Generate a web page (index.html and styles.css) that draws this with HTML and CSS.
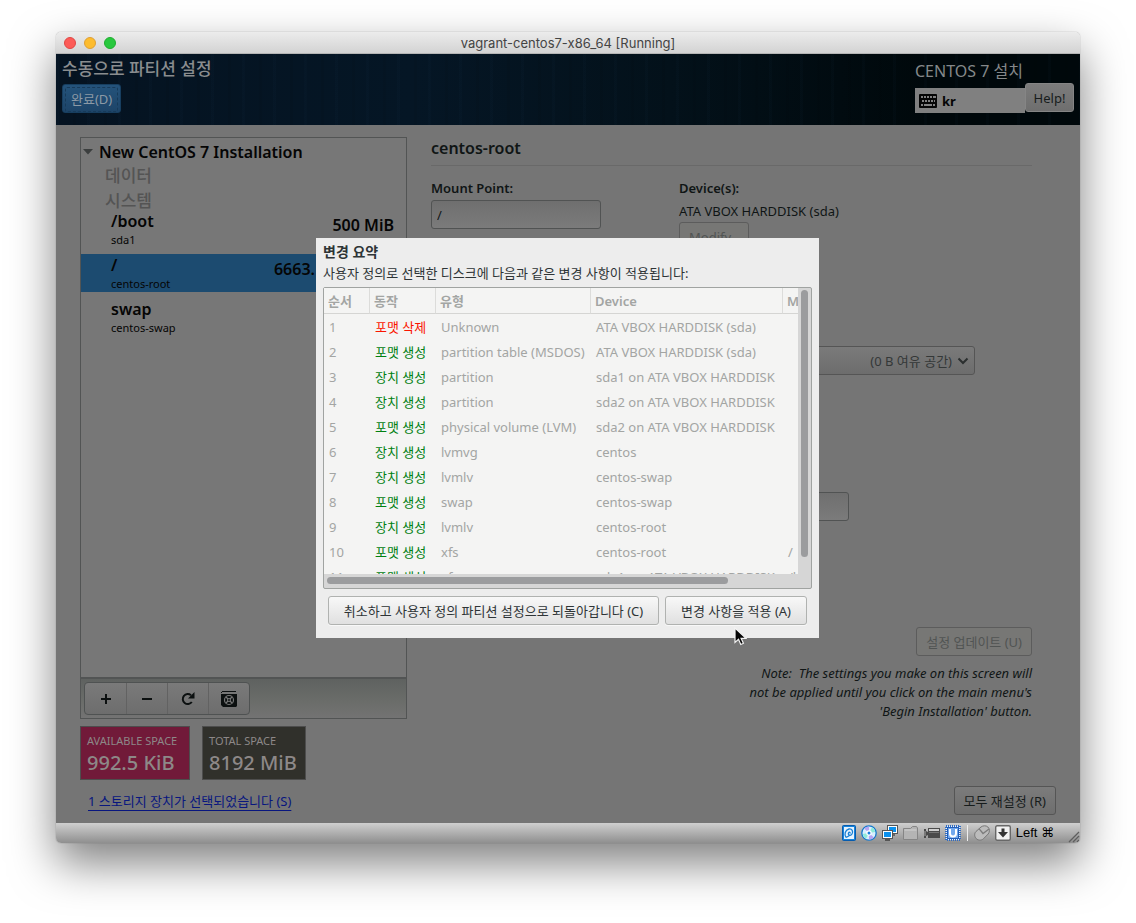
FILE: index.html
```html
<!DOCTYPE html>
<html lang="ko">
<head>
<meta charset="utf-8">
<title>vagrant-centos7-x86_64 [Running]</title>
<link rel="stylesheet" href="styles.css">
</head>
<body>
<div class="window">
  <div class="titlebar">
    <div class="lights">
      <button class="light red" aria-label="Close"></button>
      <button class="light amber" aria-label="Minimize"></button>
      <button class="light green" aria-label="Zoom"></button>
    </div>
    <span class="caption">vagrant-centos7-x86_64 [Running]</span>
  </div>

  <div class="screen">
    <header class="header">
      <div class="header-left">
        <h1>수동으로 파티션 설정</h1>
        <button class="done"><span>완료(D)</span></button>
      </div>
      <div class="header-right">
        <div class="product">
          <span class="product-name">CENTOS 7 설치</span>
          <button class="layout">
            <svg width="18" height="14" viewBox="0 0 18 14"><rect width="18" height="14" rx="1" fill="#050505"/><path d="M2 3h2m1 0h2m1 0h2m1 0h2m1 0h3M3 7h2m1 0h2m1 0h2m1 0h2m1 0h1M2 11h2m1 0h8m1 0h2" stroke="#808080" stroke-width="2"/></svg>
            <span>kr</span>
          </button>
        </div>
        <button class="btn help">Help!</button>
      </div>
    </header>

    <main class="content">
      <div class="panes">
        <section class="left">
          <div class="tree">
            <div class="root">
              <svg width="10" height="6" viewBox="0 0 10 6"><path d="M0 0h10L5 5.500z" fill="#3b3e3e"/></svg>
              <span>New CentOS 7 Installation</span>
            </div>
            <div class="group">데이터</div>
            <div class="group">시스템</div>
            <div class="mount">
              <div><div class="mount-name">/boot</div><div class="mount-dev">sda1</div></div>
              <div class="mount-size">500 MiB</div>
            </div>
            <div class="mount selected">
              <div><div class="mount-name">/</div><div class="mount-dev">centos-root</div></div>
              <div class="mount-size">6663.</div>
            </div>
            <div class="mount">
              <div><div class="mount-name">swap</div><div class="mount-dev">centos-swap</div></div>
              <div class="mount-size"></div>
            </div>
          </div>
          <div class="toolbar">
            <div class="tools">
              <button aria-label="Add"><svg width="12" height="12" viewBox="0 0 12 12"><path d="M6 1v10M1 6h10" stroke="#0c1010" stroke-width="2"/></svg></button>
              <button aria-label="Remove"><svg width="12" height="12" viewBox="0 0 12 12"><path d="M1 6h10" stroke="#0c1010" stroke-width="2"/></svg></button>
              <button aria-label="Reload"><svg width="14" height="14" viewBox="0 0 14 14"><path d="M10.800 10A5 5 0 1 1 10 3.200" fill="none" stroke="#0c1010" stroke-width="2"/><path d="M13.500 0v6.500H7z" fill="#0c1010"/></svg></button>
              <button aria-label="Configure"><svg width="16" height="16" viewBox="0 0 16 16"><path d="M1 0h14v1H1zM0 1h1v1H0zM0 3h16v12l-1 1H2l-2-2z" fill="#0c1010"/><circle cx="8" cy="9" r="4.500" fill="none" stroke="#777" stroke-width="1.200"/><circle cx="8" cy="9" r="1.500" fill="none" stroke="#777"/><path d="M5 6l2 2m2 2 2 2M11 6 9 8m-2 2-2 2" stroke="#777" stroke-width="1.200"/></svg></button>
            </div>
          </div>
          <div class="spaces">
            <div class="space pink"><div class="space-label">AVAILABLE SPACE</div><div class="space-value">992.5 KiB</div></div>
            <div class="space dark"><div class="space-label">TOTAL SPACE</div><div class="space-value">8192 MiB</div></div>
          </div>
        </section>

        <section class="right">
          <h2>centos-root</h2>
          <div class="fields">
            <div class="field">
              <label for="mount">Mount Point:</label>
              <input id="mount" class="entry" type="text" value="/">
            </div>
            <div class="field">
              <span class="label">Device(s):</span>
              <span class="device">ATA VBOX HARDDISK (sda)</span>
              <button class="btn modify" disabled>Modify...</button>
            </div>
          </div>
          <div class="fields group-row">
            <div class="combo">
              <select aria-label="Volume Group"><option>(0 B 여유 공간)</option></select>
              <svg class="chevron" width="12" height="8" viewBox="0 0 12 8"><path d="M1.500 1.500 6 6l4.500-4.500" fill="none" stroke="#2b2f2f" stroke-width="2"/></svg>
            </div>
          </div>
          <div class="fields name-row">
            <input class="entry" type="text" aria-label="Name">
          </div>
          <div class="update">
            <button class="btn" disabled>설정 업데이트 (U)</button>
            <p class="note">Note:&nbsp; The settings you make on this screen will<br>not be applied until you click on the main menu's<br>'Begin Installation' button.</p>
          </div>
        </section>
      </div>
      <div class="bottom">
        <a class="storage" href="#">1 스토리지 장치가 선택되었습니다 (S)</a>
        <button class="btn">모두 재설정 (R)</button>
      </div>
    </main>

    <div class="dialog" role="dialog" aria-labelledby="dialog-title">
      <h3 id="dialog-title">변경 요약</h3>
      <p>사용자 정의로 선택한 디스크에 다음과 같은 변경 사항이 적용됩니다:</p>
      <div class="scroller">
        <div class="viewport">
          <table>
            <colgroup><col class="c-order"><col class="c-action"><col class="c-type"><col class="c-device"><col class="c-mount"></colgroup>
            <thead><tr><th>순서</th><th>동작</th><th>유형</th><th>Device</th><th>Mount point</th></tr></thead>
            <tbody>
              <tr><td>1</td><td class="destroy">포맷 삭제</td><td>Unknown</td><td>ATA VBOX HARDDISK (sda)</td><td></td></tr>
              <tr><td>2</td><td class="create">포맷 생성</td><td>partition table (MSDOS)</td><td>ATA VBOX HARDDISK (sda)</td><td></td></tr>
              <tr><td>3</td><td class="create">장치 생성</td><td>partition</td><td>sda1 on ATA VBOX HARDDISK</td><td></td></tr>
              <tr><td>4</td><td class="create">장치 생성</td><td>partition</td><td>sda2 on ATA VBOX HARDDISK</td><td></td></tr>
              <tr><td>5</td><td class="create">포맷 생성</td><td>physical volume (LVM)</td><td>sda2 on ATA VBOX HARDDISK</td><td></td></tr>
              <tr><td>6</td><td class="create">장치 생성</td><td>lvmvg</td><td>centos</td><td></td></tr>
              <tr><td>7</td><td class="create">장치 생성</td><td>lvmlv</td><td>centos-swap</td><td></td></tr>
              <tr><td>8</td><td class="create">포맷 생성</td><td>swap</td><td>centos-swap</td><td></td></tr>
              <tr><td>9</td><td class="create">장치 생성</td><td>lvmlv</td><td>centos-root</td><td></td></tr>
              <tr><td>10</td><td class="create">포맷 생성</td><td>xfs</td><td>centos-root</td><td>/</td></tr>
              <tr><td>11</td><td class="create">포맷 생성</td><td>xfs</td><td>sda1 on ATA VBOX HARDDISK</td><td>/boot</td></tr>
            </tbody>
          </table>
        </div>
        <div class="track-v"><div class="thumb-v"></div></div>
        <div class="track-h"><div class="thumb-h"></div></div>
      </div>
      <div class="actions">
        <button class="btn light-btn cancel">취소하고 사용자 정의 파티션 설정으로 되돌아갑니다 (C)</button>
        <button class="btn light-btn accept">변경 사항을 적용 (A)</button>
      </div>
      <svg class="cursor" width="13" height="19" viewBox="0 0 13 19"><path d="M1 1v14.500l3.500-3.200 2.300 5.200 2.600-1.200-2.300-5H12z" fill="#050505" stroke="#f4f4f4" stroke-width="1.200"/></svg>
    </div>
  </div>

  <footer class="status">
    <svg width="14" height="16" viewBox="0 0 14 16"><rect x=".5" y=".5" width="13" height="15" rx="1" fill="#1583dc" stroke="#075cae"/><rect x="2" y="2" width="10" height="12" fill="#e6f4ff"/><path d="M4 12.500c-2-3-1-7.500 3-8.500 3-.5 4.500 2.500 3 5-1.500 2.500-4.500 1-3.500-1 .6-1.200 2-.8 1.500.5M4 12.500 8.500 10" fill="none" stroke="#187fd3" stroke-width="1.300"/></svg>
    <svg width="16" height="16" viewBox="0 0 16 16"><circle cx="8" cy="8" r="7.200" fill="#d8efff" stroke="#1478cc" stroke-width="1.300"/><path d="M8 8 3 3.500A7 7 0 0 1 8 1.600zM8 8l5 4.500A7 7 0 0 1 8 14.400z" fill="#b6a5f2"/><path d="M8 8l6.300-1A6.500 6.500 0 0 0 11 2.300zM8 8l-6.300 1A6.500 6.500 0 0 0 5 13.700z" fill="#8eead9"/><circle cx="8" cy="8" r="2.700" fill="#fff"/><circle cx="8" cy="8" r="1.500" fill="#1682dd"/></svg>
    <svg width="16" height="16" viewBox="0 0 16 16"><path d="M5 0h11v9H5z" fill="#555"/><path d="M6 1h9v7H6z" fill="#fff"/><path d="M7 2h7v5H7z" fill="#0b91ee"/><path d="M11 9h2v2h-2z" fill="#666"/><path d="M0 5h11v9H0zM3 14h5v2H3z" fill="#555"/><path d="M1 6h9v7H1z" fill="#fff"/><path d="M2 7h7v5H2z" fill="#0b91ee"/></svg>
    <svg width="16" height="16" viewBox="0 0 16 16"><path d="M.5 14.500v-11h7l2-2h4l1 1.500v11.500z" fill="#b4b4b4" stroke="#858585"/><path d="M1.500 5h12" stroke="#d2d2d2"/></svg>
    <svg width="16" height="16" viewBox="0 0 16 16"><path d="M0 4h2v2l2 1V3h12v10H4v-3l-2 1v2H0z" fill="#4b4b4b"/><path d="M5 5h10" stroke="#d0d0d0" stroke-width="2"/><path d="M5 7.500h10" stroke="#777"/><path d="M1 6v5" stroke="#aaa"/></svg>
    <svg width="16" height="16" viewBox="0 0 16 16"><rect x="1" y="1" width="14" height="14" fill="#e9f2ff" stroke="#2d6bc5" stroke-width="2" stroke-dasharray="1 1"/><rect x="2.500" y="2.500" width="11" height="11" fill="#72a8ed" stroke="#235eb7"/><path d="M5 4v4.500a3 3 0 0 0 6 0V4" fill="none" stroke="#fff" stroke-width="2"/></svg>
    <span class="divider"></span>
    <svg width="16" height="16" viewBox="0 0 16 16"><path d="M2 6.500 7 2c2-1.500 5-1.700 6.900 0s2 5 .3 7L9.500 13.700c-2 2-5.300 1.800-7.200 0S0 8.500 2 6.500z" fill="#bcbcbc" stroke="#777"/><path d="m5 3.700 4 4.800L15 4M9 8.500 7 6" fill="none" stroke="#7c7c7c" stroke-width="1.300"/></svg>
    <svg width="16" height="16" viewBox="0 0 16 16"><rect x=".7" y=".7" width="14.600" height="14.600" rx="1.500" fill="#f1f1f1" stroke="#686868" stroke-width="1.400"/><path d="M6.500 3.500h3V7H13l-5 5.500L3 7h3.500z" fill="#333"/></svg>
    <span class="hostkey">Left ⌘</span>
    <svg class="grip" width="12" height="12" viewBox="0 0 12 12"><path d="M1 11 11 1M5 11l6-6M9 11l2-2" stroke="#5e5e5e" stroke-width="1.300"/></svg>
  </footer>
</div>
</body>
</html>
```
FILE: styles.css
```css
* { box-sizing: border-box; }

body {
  margin: 0;
  min-height: 100vh;
  padding: 32px 56px 80px;
  display: flex;
  background: #fff;
  color: #101515;
  font: 13px/18px "Noto Sans", "Noto Sans CJK KR", sans-serif;
}

button, input, select { font: inherit; color: inherit; margin: 0; }
h1, h2, h3, p { margin: 0; }

.window {
  flex: 1;
  display: flex;
  flex-direction: column;
  border-radius: 5px;
  overflow: hidden;
  box-shadow: 0 0 1px rgba(0, 0, 0, .5), 0 20px 45px rgba(0, 0, 0, .5);
}

.titlebar {
  height: 22px;
  flex: none;
  display: flex;
  align-items: center;
  padding: 0 8px;
  background: linear-gradient(#ececec, #d3d3d3);
  border-bottom: 1px solid #b5b5b5;
}
.lights { display: flex; gap: 8px; flex: 1; }
.titlebar::after { content: ""; flex: 1; }
.light { width: 12px; height: 12px; padding: 0; border: 1px solid; border-radius: 50%; }
.red { background: #fc5b57; border-color: #df4744; }
.amber { background: #fdbc2e; border-color: #de9f34; }
.green { background: #28c83e; border-color: #1fad2f; }
.caption { font: 13px/20px Inter, sans-serif; color: #444; }

.screen {
  position: relative;
  flex: 1;
  display: flex;
  flex-direction: column;
  background: #757575;
}

.header {
  display: flex;
  justify-content: space-between;
  height: 71px;
  padding: 4px 6px;
  background:
    repeating-linear-gradient(90deg, rgba(40, 80, 120, .04) 0 3px, transparent 3px 17px, rgba(0, 0, 0, .06) 17px 20px, transparent 20px 31px),
    linear-gradient(90deg, #051321 0%, #051625 35%, #03111a 60%, #00080b 85%);
}
.header-left { display: flex; flex-direction: column; align-items: flex-start; gap: 4px; }
.header h1 { font-size: 17px; line-height: 22px; font-weight: 500; color: #8a8d8f; }
.done {
  height: 29px;
  padding: 2px;
  border: 1px solid #173e5f;
  border-radius: 3px;
  background: linear-gradient(#24537b, #1d4468);
  color: #8c9aa6;
}
.done span { display: block; padding: 2px 5px; border: 1px dashed #173a59; border-radius: 2px; line-height: 19px; }
.header-right { display: flex; align-items: flex-end; padding-bottom: 8px; }
.product { display: flex; flex-direction: column; width: 110px; gap: 6px; }
.product-name { font-size: 16px; line-height: 22px; color: #85888a; white-space: nowrap; }
.layout {
  display: flex;
  align-items: center;
  gap: 5px;
  height: 25px;
  padding: 0 4px;
  border: 0;
  background: #808080;
  color: #050505;
  font-weight: 700;
}

.btn {
  height: 29px;
  padding: 0 9px;
  border: 1px solid #555;
  border-radius: 3px;
  background: linear-gradient(#7c7c7c, #6e6e6e);
  color: #171c1c;
  white-space: nowrap;
}
.btn:disabled { background: #777775; border-color: #5c5c5c; color: #515453; }
.btn.help { width: 49px; padding: 0; border-color: #858585; margin-bottom: 1px; }

.content { flex: 1; display: flex; flex-direction: column; padding: 12px 24px 8px; }
.panes { flex: 1; display: grid; grid-template-columns: 327px 1fr; gap: 24px; }

.left { display: flex; flex-direction: column; }
.tree { flex: 1; border: 1px solid #525454; background: #777; color: #050505; padding-top: 3px; }
.root { display: flex; align-items: center; gap: 6px; padding-left: 2px; font-size: 16px; line-height: 22px; font-weight: 600; }
.group { padding-left: 24px; font-size: 17px; line-height: 25px; font-weight: 500; color: #545454; }
.group + .mount { margin-top: -3px; }
.mount { display: flex; justify-content: space-between; align-items: flex-start; height: 38px; margin-bottom: 6px; padding: 0 12px 0 30px; }
.mount-name, .mount-size { font-size: 16px; line-height: 22px; font-weight: 600; }
.mount-size { padding-top: 4px; }
.mount-dev { font-size: 11px; line-height: 16px; }
.selected { background: #1c4b70; }
.selected .mount-size { padding-right: 79px; }

.toolbar { padding: 3px; border: 1px solid #525454; background: linear-gradient(#5f6260, #6b6d6a 60%, #737373); }
.tools { display: inline-flex; vertical-align: top; border: 1px solid #4f5252; border-radius: 4px; background: linear-gradient(#7a7a7a, #6d6d6d); }
.tools button { display: grid; place-items: center; width: 41px; height: 31px; padding: 0; border: 0; border-left: 1px solid #626262; background: none; }
.tools button:first-child { border-left: 0; }

.spaces { display: flex; gap: 12px; margin-top: 7px; }
.space { min-width: 104px; padding: 5px 6px 4px; border: 1px solid #4d4d4d; color: #8d8888; }
.pink { min-width: 110px; background: #711a39; }
.dark { background: #30302b; }
.space-label { font-size: 11px; line-height: 18px; }
.space-value { font-size: 20px; line-height: 25px; font-weight: 500; }

.right { display: flex; flex-direction: column; margin-right: 24px; }
.right h2 { font-size: 16px; line-height: 22px; font-weight: 600; padding-bottom: 6px; border-bottom: 1px solid #696969; }
.fields { display: grid; grid-template-columns: 248px 1fr; margin-top: 13px; }
.field { display: flex; flex-direction: column; align-items: flex-start; }
.field label, .label { font-weight: 600; line-height: 18px; }
.field label { margin-bottom: 3px; }
.device { margin: 5px 0 2px; }
.entry { width: 170px; height: 29px; padding: 0 5px; border: 1px solid #515353; border-radius: 3px; background: linear-gradient(#6f6f6f, #7b7b7b); outline: 0; }
.modify { width: 70px; }
.group-row { margin-top: 95px; }
.group-row > *, .name-row > * { grid-column: 2; }
.combo { position: relative; width: 296px; height: 29px; }
.combo select { width: 100%; height: 29px; padding: 0 22px 0 8px; border: 1px solid #555; border-radius: 3px; appearance: none; background: linear-gradient(#7a7a7a, #6d6d6d); color: #343838; text-align-last: right; }
.chevron { position: absolute; right: 6px; top: 11px; }
.name-row { margin-top: 117px; }
.update { margin-top: auto; padding-bottom: 59px; display: flex; flex-direction: column; align-items: flex-end; gap: 8px; }
.note { font-size: 13px; line-height: 19px; font-style: italic; text-align: right; }

.bottom { display: flex; justify-content: space-between; align-items: center; margin-top: 6px; padding-left: 8px; }
.storage { color: #08167f; text-underline-offset: 4px; }

.dialog {
  position: absolute;
  left: 260px;
  top: 184px;
  width: 503px;
  padding: 4px 7px 13px;
  background: #ededed;
  color: #2e3436;
}
.dialog h3 { font-size: 14px; line-height: 20px; font-weight: 600; }
.dialog p { line-height: 18px; margin: 2px 0 5px; }
.scroller {
  display: grid;
  grid-template: 286px 14px / 1fr 13px;
  border: 1px solid #a0a3a1;
  border-radius: 2px;
  background: #d6d6d6;
}
.viewport { overflow: hidden; background: #f4f4f3; }
.viewport table { table-layout: fixed; width: 560px; border-collapse: separate; border-spacing: 0; color: #a3a5a3; }
.c-order { width: 46px; }
.c-action { width: 66px; }
.c-type { width: 155px; }
.c-device { width: 192px; }
th, td { padding: 0 5px; text-align: left; white-space: nowrap; height: 25px; line-height: 20px; }
th { height: 26px; padding: 0 4px; font-weight: 600; border-right: 1px solid #dcdcda; border-bottom: 1px solid #d5d5d3; }
.create { color: #008011; }
.destroy { color: #fa1400; }
.track-v { padding: 2px 3px; }
.thumb-v { width: 7px; height: 267px; border-radius: 4px; background: #9b9c9e; }
.track-h { padding: 3px; }
.thumb-h { width: 401px; height: 7px; border-radius: 4px; background: #9b9c9e; }
.actions { display: flex; gap: 6px; margin-top: 7px; padding: 0 5px; }
.light-btn { border-color: #b0b2b0; background: linear-gradient(#f8f8f8, #e0e0e0); color: #2e3436; box-shadow: 0 1px 0 #f8f8f8; }
.cancel { flex: 1 1 331px; }
.accept { flex: 0 0 142px; }
.cursor { position: absolute; left: 418px; top: 389px; }

.status {
  display: flex;
  align-items: center;
  gap: 5px;
  height: 20px;
  padding-left: 12px;
  justify-content: flex-end;
  background: linear-gradient(#cfcfcf, #8f8f8f);
}
.divider { width: 1px; height: 16px; margin: 0 1px; background: #eee; }
.hostkey { font: 13px/16px "Liberation Sans", "DejaVu Sans", sans-serif; color: #000; }
.grip { align-self: flex-end; margin-left: 9px; }
```
